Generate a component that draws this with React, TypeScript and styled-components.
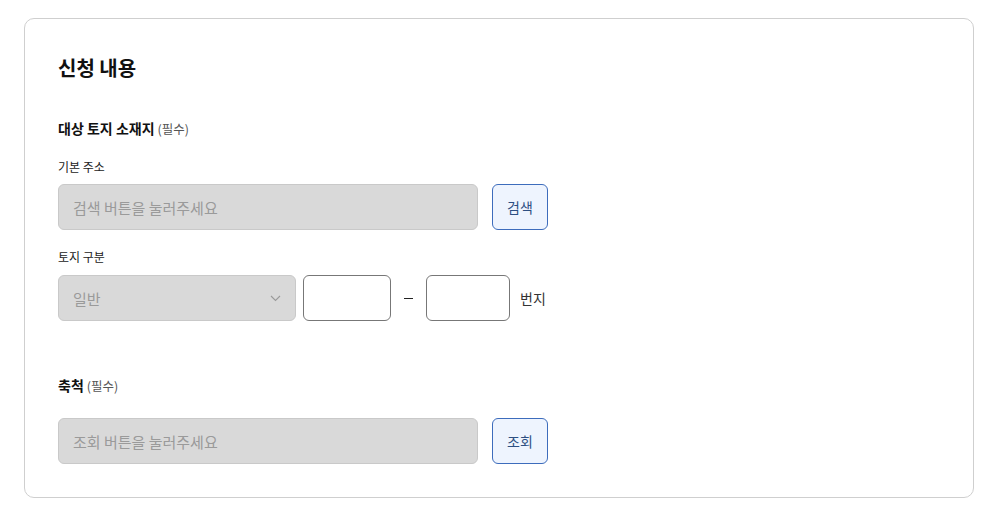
import * as React from 'react'
import styled, { createGlobalStyle } from 'styled-components';

const GlobalStyle = createGlobalStyle`
    body {
        margin: 0;
        background: #fff;
        font-family: "Noto Sans CJK KR", "Noto Sans", sans-serif;
        color: #111;
    }
`
const Page = styled.div`
    padding: 18px 23px 0 24px;
`
const Card = styled.section`
    box-sizing: border-box;
    width: 950px;
    height: 480px;
    border: 1px solid #cfcfcf;
    border-radius: 10px;
    padding: 35px 33px 0 33px;
    display: flex;
    flex-direction: column;
`
const Title = styled.h2`
    margin: 0;
    font-size: 20px;
    line-height: 28px;
    font-weight: 700;
`
const SectionLabel = styled.div<{ $top: number }>`
    margin-top: ${p => p.$top}px;
    font-size: 14px;
    line-height: 20px;
    font-weight: 700;
`
const Required = styled.span`
    font-size: 12.5px;
    font-weight: 400;
    color: #555;
    margin-left: 3px;
`
const FieldLabel = styled.div<{ $top: number }>`
    margin-top: ${p => p.$top}px;
    font-size: 12px;
    line-height: 18px;
    color: #222;
`
const Row = styled.div<{ $top: number }>`
    margin-top: ${p => p.$top}px;
    display: flex;
    align-items: center;
`
const ReadOnlyBox = styled.div<{ $width: number }>`
    box-sizing: border-box;
    width: ${p => p.$width}px;
    height: 46px;
    background: #d9d9d9;
    border: 1px solid #c9c9c9;
    border-radius: 6px;
    padding: 0 14px;
    display: flex;
    align-items: center;
    justify-content: space-between;
    font-size: 15px;
    color: #9a9a9a;
`
const ActionButton = styled.button`
    box-sizing: border-box;
    margin-left: 14px;
    width: 56px;
    height: 46px;
    border: 1px solid #3d6cbc;
    border-radius: 6px;
    background: #eef4fe;
    color: #2d4f82;
    font-family: inherit;
    font-size: 14px;
    padding: 0;
`
const NumberInput = styled.input<{ $width: number }>`
    box-sizing: border-box;
    width: ${p => p.$width}px;
    height: 46px;
    border: 1px solid #777;
    border-radius: 6px;
    background: #fff;
    font-family: inherit;
    font-size: 15px;
    padding: 0 10px;
`
const Dash = styled.span`
    width: 35px;
    display: flex;
    justify-content: center;
    &::before {
        content: "";
        width: 9px;
        height: 1px;
        background: #222;
    }
`
const Unit = styled.span`
    margin-left: 10px;
    font-size: 14px;
    color: #333;
`
const Gap = styled.span`
    width: 7px;
`

const Chevron = () => (
    <svg width="11" height="7" viewBox="0 0 11 7" fill="none">
        <path d="M1 1l4.5 4.5L10 1" stroke="#9a9a9a" strokeWidth="1.1" />
    </svg>
)

export default function App() {
    return (
        <Page>
            <GlobalStyle />
            <Card>
                <Title>신청 내용</Title>

                <SectionLabel $top={36}>대상 토지 소재지<Required>(필수)</Required></SectionLabel>
                <FieldLabel $top={19}>기본 주소</FieldLabel>
                <Row $top={8}>
                    <ReadOnlyBox $width={420}>검색 버튼을 눌러주세요</ReadOnlyBox>
                    <ActionButton>검색</ActionButton>
                </Row>

                <FieldLabel $top={18}>토지 구분</FieldLabel>
                <Row $top={9}>
                    <ReadOnlyBox $width={238}>
                        일반
                        <Chevron />
                    </ReadOnlyBox>
                    <Gap />
                    <NumberInput $width={88} />
                    <Dash />
                    <NumberInput $width={84} />
                    <Unit>번지</Unit>
                </Row>

                <SectionLabel $top={54}>축척<Required>(필수)</Required></SectionLabel>
                <Row $top={22}>
                    <ReadOnlyBox $width={420}>조회 버튼을 눌러주세요</ReadOnlyBox>
                    <ActionButton>조회</ActionButton>
                </Row>
            </Card>
        </Page>
    )
}
